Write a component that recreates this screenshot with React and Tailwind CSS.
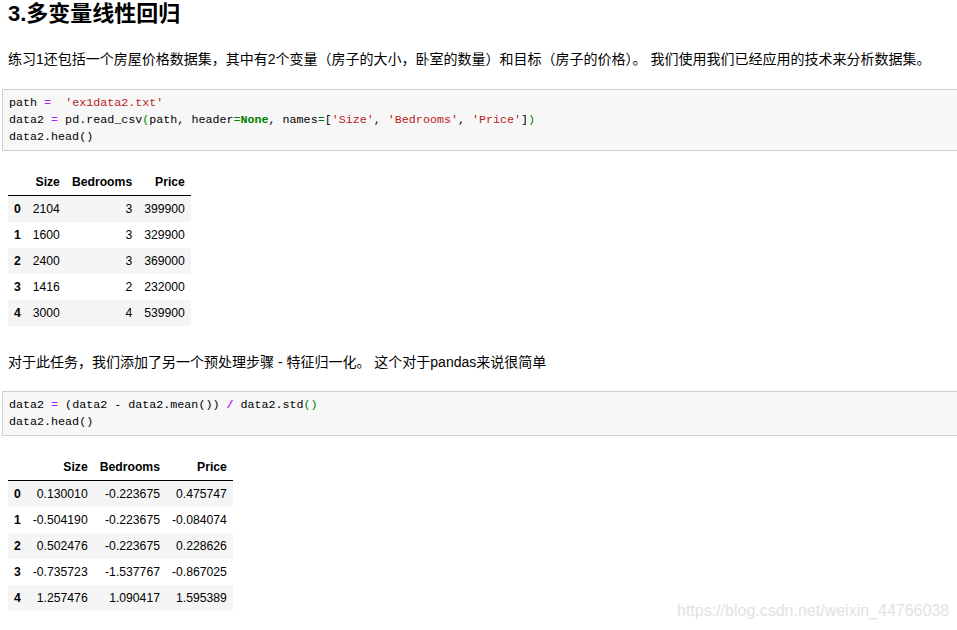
import React from "react";

const table1 = {
  cols: ["Size", "Bedrooms", "Price"],
  rows: [
    ["2104", "3", "399900"],
    ["1600", "3", "329900"],
    ["2400", "3", "369000"],
    ["1416", "2", "232000"],
    ["3000", "4", "539900"],
  ],
};

const table2 = {
  cols: ["Size", "Bedrooms", "Price"],
  rows: [
    ["0.130010", "-0.223675", "0.475747"],
    ["-0.504190", "-0.223675", "-0.084074"],
    ["0.502476", "-0.223675", "0.228626"],
    ["-0.735723", "-1.537767", "-0.867025"],
    ["1.257476", "1.090417", "1.595389"],
  ],
};

function DataFrame({ data }) {
  return (
    <table className="ml-2 mt-[18px] border-collapse text-[12.2px] leading-[14px] text-black">
      <thead>
        <tr className="border-b border-black">
          <th className="px-[6px] py-[6px]"></th>
          {data.cols.map((c) => (
            <th key={c} className="px-[6px] py-[6px] text-right font-bold">
              {c}
            </th>
          ))}
        </tr>
      </thead>
      <tbody>
        {data.rows.map((r, i) => (
          <tr key={i} className={i % 2 === 0 ? "bg-[#f5f5f5]" : "bg-white"}>
            <th className="px-[6px] py-[6px] text-left font-bold">{i}</th>
            {r.map((v, j) => (
              <td key={j} className="px-[6px] py-[6px] text-right">
                {v}
              </td>
            ))}
          </tr>
        ))}
      </tbody>
    </table>
  );
}

function CodeBox({ children }) {
  return (
    <div className="ml-[2px] border border-r-0 border-[#cfcfcf] bg-[#f7f7f7] pl-[6px] pt-[5px] pb-[4px] font-['Liberation_Mono','Noto_Sans_CJK_SC',monospace] text-[11.7px] leading-[17px] text-black whitespace-pre">
      {children}
    </div>
  );
}

export default function App() {
  return (
    <div className="relative w-[957px] h-[630px] overflow-hidden bg-white font-['Liberation_Sans','Noto_Sans_CJK_SC',sans-serif] text-black">
      <h3 className="pl-2 text-[22px] leading-[28px] font-bold">3.多变量线性回归</h3>

      <p className="mt-[22px] pl-2 text-[14px] leading-[18px]">
        练习1还包括一个房屋价格数据集，其中有2个变量（房子的大小，卧室的数量）和目标（房子的价格）。 我们使用我们已经应用的技术来分析数据集。
      </p>

      <div className="mt-[21px]">
        <CodeBox>
          <div>
            path <span className="text-[#aa22ff]">=</span>  <span className="text-[#ba2121]">'ex1data2.txt'</span>
          </div>
          <div>
            data2 <span className="text-[#aa22ff]">=</span> pd.read_csv<span className="text-[#008000]">(</span>path, header<span className="text-[#008000]">=</span>
            <span className="text-[#008000] font-bold">None</span>, names<span className="text-[#008000]">=</span>[<span className="text-[#ba2121]">'Size'</span>, <span className="text-[#ba2121]">'Bedrooms'</span>, <span className="text-[#ba2121]">'Price'</span>]<span className="text-[#008000]">)</span>
          </div>
          <div>data2.head()</div>
        </CodeBox>
      </div>

      <DataFrame data={table1} />

      <p className="mt-[27px] pl-2 text-[14px] leading-[18px]">
        对于此任务，我们添加了另一个预处理步骤 - 特征归一化。 这个对于pandas来说很简单
      </p>

      <div className="mt-[20px]">
        <CodeBox>
          <div>
            data2 <span className="text-[#aa22ff]">=</span> (data2 - data2.mean()) <span className="text-[#aa22ff] font-bold">/</span> data2.std<span className="text-[#008000]">()</span>
          </div>
          <div>data2.head()</div>
        </CodeBox>
      </div>

      <DataFrame data={table2} />

      <div className="absolute left-[677px] top-[601px] text-[16px] leading-[20px] text-[#e2e2e2]">
        https://blog.csdn.net/weixin_44766038
      </div>
    </div>
  );
}
